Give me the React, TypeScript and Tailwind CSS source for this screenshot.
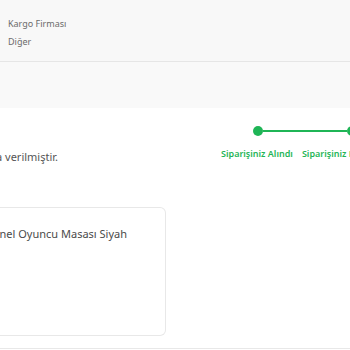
import type React from 'react';

const FONT = { fontFamily: '"Source Sans Pro", "Noto Sans", "Open Sans", sans-serif' };

const GREEN = '#1fb556';

function StepDot(): React.JSX.Element {
  return <div className="h-[10px] w-[10px] shrink-0 rounded-full bg-[#1fb556]" />;
}

function OrderStepper(): React.JSX.Element {
  return (
    <div className="flex flex-col">
      <div className="flex items-center pl-[32px]">
        <StepDot />
        <div className="h-[2px] w-[84px] bg-[#1fb556]" />
        <StepDot />
      </div>
      <div className="mt-[13px] flex gap-[9px] whitespace-nowrap text-[9px] font-semibold leading-none" style={{ color: GREEN }}>
        <span>Siparişiniz Alındı</span>
        <span>Siparişiniz Kargoda</span>
      </div>
    </div>
  );
}

export default function App(): React.JSX.Element {
  return (
    <div className="h-[350px] w-[350px] overflow-hidden bg-white" style={FONT}>
      <div className="h-[62px] border-b border-[#e6e6e6] bg-[#f8f8f8] pl-2 pt-[15px] text-[9px] leading-[18px] text-[#6b6b6b]">
        <div>Kargo Firması</div>
        <div>Diğer</div>
      </div>
      <div className="h-[46px] bg-[#f9f9f9]" />
      <div className="flex items-start pt-[18px]">
        <div className="flex w-[58px] shrink-0 justify-end whitespace-nowrap pt-[25px] text-[11px] leading-none text-[#555]">
          Siparişiniz kargoya verilmiştir.
        </div>
        <div className="ml-[163px]">
          <OrderStepper />
        </div>
      </div>
      <div className="mt-[45px] h-[129px] w-[166px] rounded-r-md border border-l-0 border-[#e8e8e8] bg-white pt-[20px]">
        <div className="flex w-[127px] justify-end whitespace-nowrap text-[11px] leading-none text-[#4a4a4a]">
          Profesyonel Oyuncu Masası Siyah
        </div>
      </div>
      <div className="mt-[12px] border-t border-[#e8e8e8]" />
    </div>
  );
}
